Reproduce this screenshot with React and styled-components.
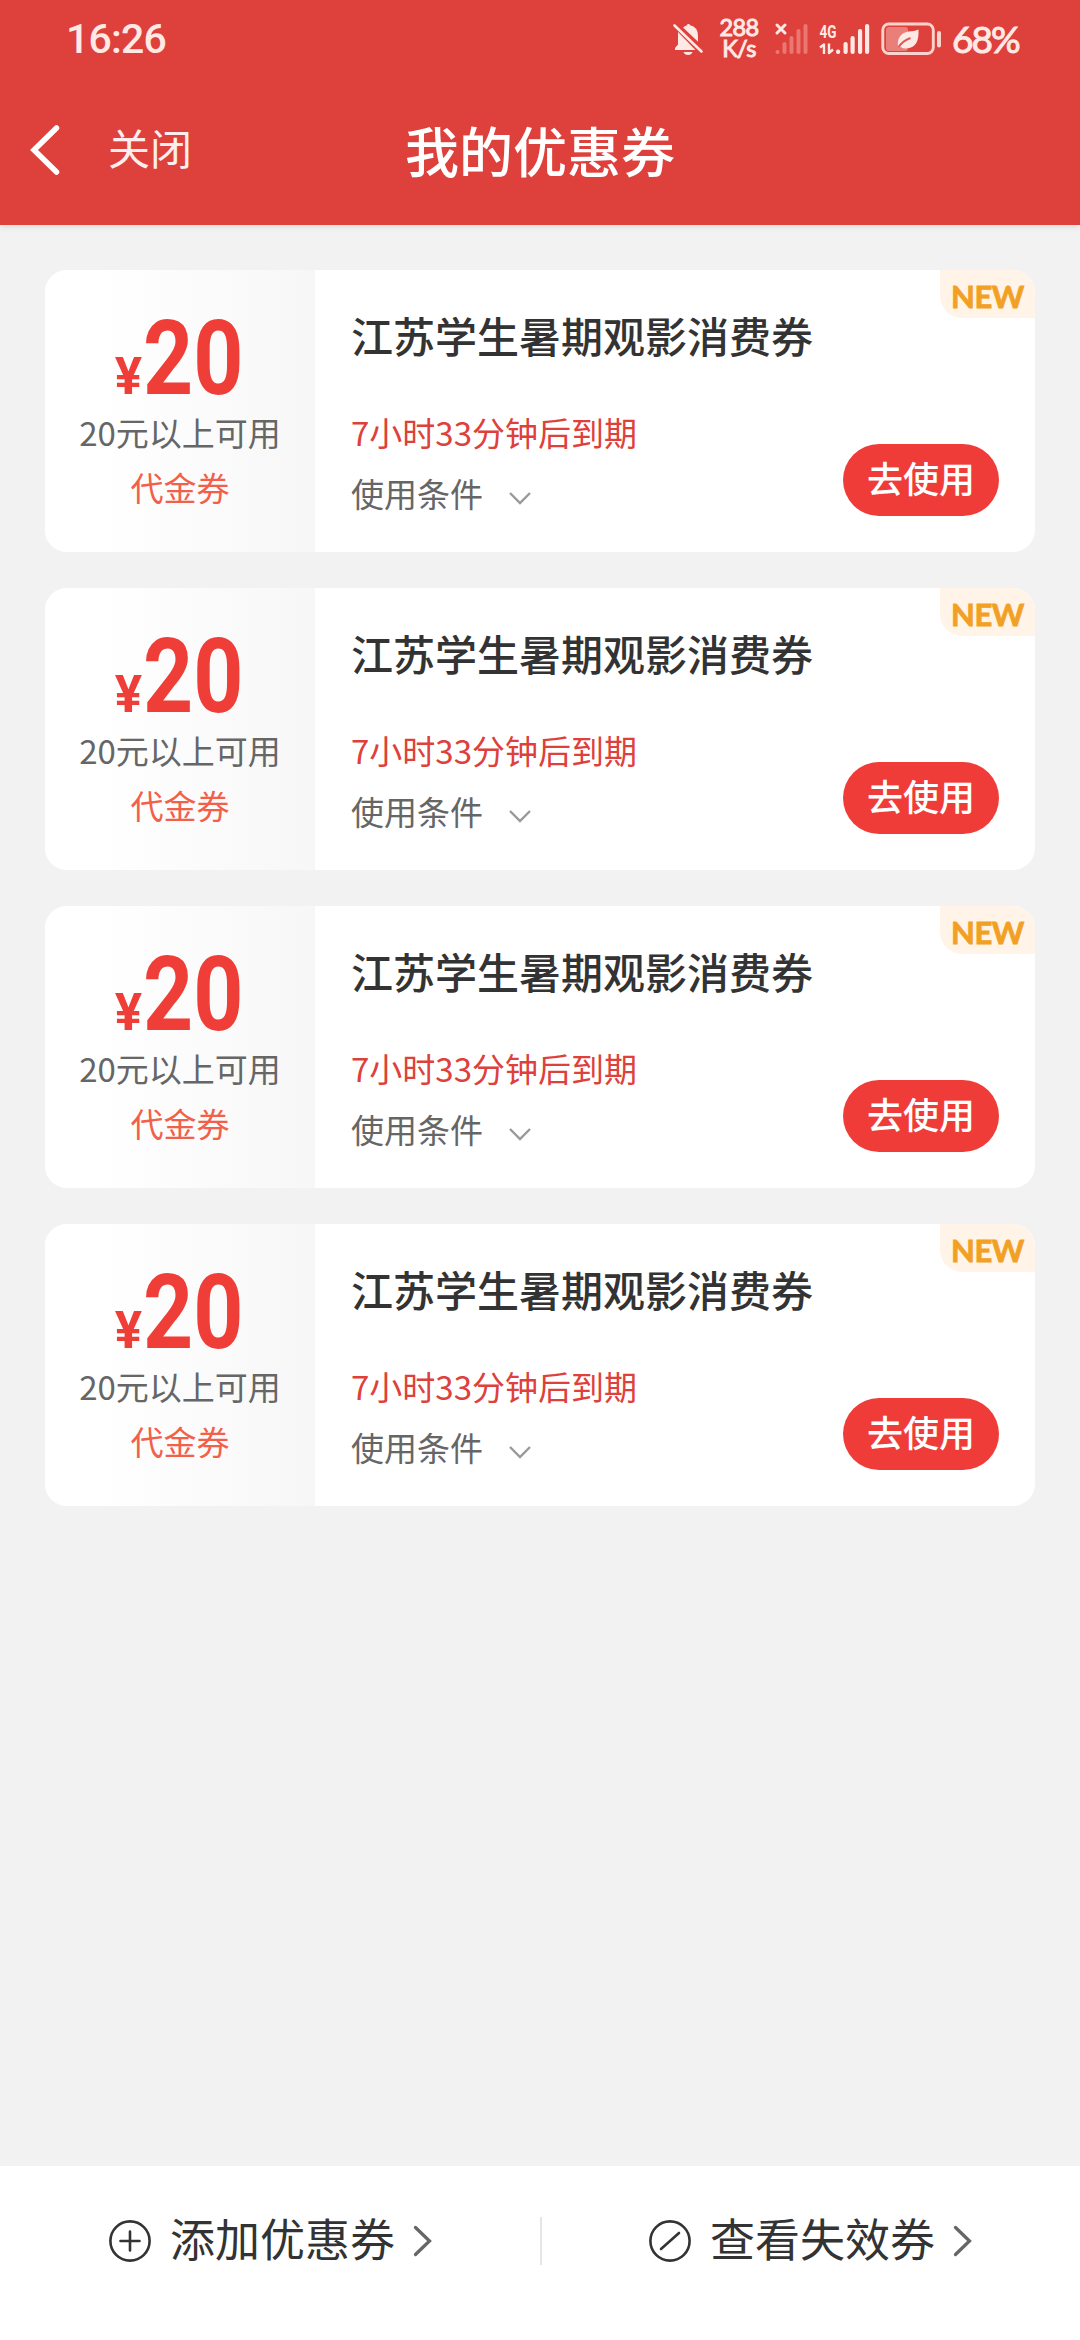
import React from "react";
import styled, { createGlobalStyle } from "styled-components";

const GlobalStyle = createGlobalStyle`
  * { box-sizing: border-box; }
  body {
    margin: 0;
    background: #f2f2f2;
    font-family: "Noto Sans CJK SC", "Noto Sans", sans-serif;
    color: #333;
  }
`;

const Screen = styled.div`
  display: flex;
  flex-direction: column;
  width: 1080px;
  height: 2340px;
  background: #f2f2f2;
  overflow: hidden;
`;

const Header = styled.header`
  height: 225px;
  background: #de403b;
  color: #fff;
  box-shadow: 0 2px 5px rgba(0, 60, 50, 0.1);
`;

const StatusBar = styled.div`
  display: flex;
  align-items: center;
  height: 78px;
  padding: 0 61px 0 66px;
  color: #ffe9e5;
  font-family: Lato, sans-serif;
`;

const Clock = styled.span`
  margin-right: auto;
  font-family: Roboto, sans-serif;
  font-size: 41px;
  font-weight: 500;
  line-height: 48px;
  letter-spacing: -0.8px;
`;

const StatusIcon = styled.svg`
  display: block;
  flex: none;
  overflow: visible;
  margin: ${(p) => p.$margin || "0"};
`;

const Speed = styled.span`
  display: flex;
  flex-direction: column;
  align-items: center;
  width: 38px;
  margin-right: 17px;
  padding-bottom: 3px;
  font-size: 23.5px;
  font-weight: 400;
  line-height: 21px;
  letter-spacing: -0.6px;
  white-space: nowrap;
  -webkit-text-stroke: 1px currentColor;
`;

const Percent = styled.span`
  width: 67px;
  font-size: 37px;
  font-weight: 400;
  line-height: 48px;
  letter-spacing: -2px;
  white-space: nowrap;
  -webkit-text-stroke: 1px currentColor;
`;

const NavBar = styled.nav`
  display: grid;
  grid-template-columns: 1fr auto 1fr;
  align-items: center;
  height: 144px;
  padding: 0 30px;
`;

const NavLeft = styled.div`
  display: flex;
  align-items: center;
  gap: 46px;
`;

const CloseText = styled.span`
  font-size: 42px;
  font-weight: 400;
  line-height: 60px;
  padding-bottom: 6px;
  color: #fdeeed;
`;

const PageTitle = styled.h1`
  margin: 0;
  font-size: 54px;
  font-weight: 500;
  line-height: 80px;
`;

const CouponList = styled.main`
  display: flex;
  flex: 1;
  flex-direction: column;
  gap: 36px;
  padding: 45px;
`;

const Card = styled.article`
  position: relative;
  display: flex;
  height: 282px;
  border-radius: 22px;
  background: #fff;
  overflow: hidden;
`;

const Stub = styled.div`
  display: flex;
  flex-direction: column;
  align-items: center;
  width: 270px;
  padding-top: 39px;
  background: linear-gradient(90deg, #fff 20%, #f7f7f7);
`;

const Amount = styled.div`
  display: flex;
  align-items: baseline;
  height: 99px;
  color: #ef3e38;
  font-family: Roboto, sans-serif;
  font-weight: 700;
  line-height: 99px;
`;

const Currency = styled.span`
  margin-right: 1px;
  font-size: 51px;
`;

const Value = styled.span`
  width: 102px;
  font-size: 103px;
  transform: scaleX(0.85);
  transform-origin: left;
`;

const StubNote = styled.span`
  font-size: 33px;
  line-height: 49px;
  color: #666;
`;

const StubKind = styled.span`
  margin-top: 6px;
  font-size: 33px;
  line-height: 49px;
  color: #f2604a;
`;

const Body = styled.div`
  flex: 1;
  padding: 35px 36px 0;
`;

const CouponTitle = styled.h2`
  margin: 0;
  font-size: 42px;
  font-weight: 500;
  line-height: 60px;
  color: #333;
`;

const BodyRow = styled.div`
  display: flex;
  align-items: flex-start;
  justify-content: space-between;
  margin-top: 43px;
`;

const Details = styled.div`
  display: flex;
  flex-direction: column;
  gap: 12px;
`;

const Expiry = styled.span`
  font-size: 33px;
  line-height: 49px;
  color: #de403b;
`;

const Terms = styled.span`
  display: flex;
  align-items: center;
  gap: 25px;
  font-size: 33px;
  line-height: 49px;
  color: #666;
`;

const UseButton = styled.button`
  width: 156px;
  height: 72px;
  margin: 36px 0 0;
  padding: 0 0 5px;
  border: 0;
  border-radius: 36px;
  background: #f03c38;
  color: #fff;
  font: 500 36px/67px "Noto Sans CJK SC", sans-serif;
`;

const Badge = styled.span`
  position: absolute;
  top: 0;
  right: 0;
  width: 95px;
  height: 48px;
  border-radius: 0 22px 0 22px;
  background: #fff4e7;
  color: #f2a024;
  font: 700 31px/53px Lato, sans-serif;
  -webkit-text-stroke: 0.8px currentColor;
  letter-spacing: -0.5px;
  text-align: center;
`;

const Footer = styled.footer`
  display: flex;
  height: 174px;
  padding: 51px 0 0 2px;
  background: #fff;
`;

const Divider = styled.i`
  width: 2px;
  height: 48px;
  background: #e6e6e6;
`;

const FooterAction = styled.div`
  display: flex;
  flex: 1;
  align-items: center;
  justify-content: center;
  height: 48px;
`;

const FooterLabel = styled.span`
  margin: 0 18px 7px 19px;
  font-size: 45px;
  line-height: 60px;
  color: #333;
`;

const MutedBell = () => (
  <StatusIcon width="32" height="34" viewBox="0 0 32 34" $margin="0 15px 0 0" fill="currentColor">
    <path d="M5 10 L22.5 28 H2 V26 L5 22.5 Z" />
    <path d="M10 5.500 Q12.500 3.600 14 3.300 Q14 2 15.500 2 Q17 2 17 3.300 Q25 5 25 14 V19.800 Z" />
    <path d="M1.500 3.500 L28.500 29.500" fill="none" stroke="currentColor" strokeWidth="2.600" strokeLinecap="round" />
    <path d="M10.500 30 H19.500 Q18.500 33 15 33 Q11.500 33 10.500 30 Z" />
  </StatusIcon>
);

const NoService = () => (
  <StatusIcon width="34" height="34" viewBox="0 0 34 34" $margin="0 10px 0 0">
    <path d="M2 3 L10 11 M10 3 L2 11" stroke="currentColor" strokeWidth="3" strokeLinecap="round" />
    <g fill="#ea7771">
      <rect x="0.500" y="28" width="4" height="4" rx="2" />
      <rect x="7.500" y="20" width="4" height="12" rx="2" />
      <rect x="14.500" y="14" width="4" height="18" rx="2" />
      <rect x="21.500" y="7" width="4" height="25" rx="2" />
      <rect x="28.500" y="2" width="4" height="30" rx="2" />
    </g>
  </StatusIcon>
);

const MobileSignal = () => (
  <StatusIcon width="52" height="34" viewBox="0 0 52 34" $margin="0 10px 0 0" fill="currentColor">
    <text x="0.500" y="15.500" fontFamily="Roboto, sans-serif" fontWeight="700" fontSize="19" textLength="17" lengthAdjust="spacingAndGlyphs">4G</text>
    <path d="M1 25.500 L5 22.500 V32 M10 21.500 V31 L14 27.500" fill="none" stroke="currentColor" strokeWidth="2.400" strokeLinejoin="round" />
    <rect x="17" y="27.500" width="4.200" height="4.500" rx="2" />
    <rect x="24.500" y="20" width="4.200" height="12" rx="2" />
    <rect x="31.500" y="14" width="4.200" height="18" rx="2" />
    <rect x="39" y="7" width="4.200" height="25" rx="2" />
    <rect x="46" y="2" width="4.200" height="30" rx="2" />
  </StatusIcon>
);

const Battery = () => (
  <StatusIcon width="62" height="34" viewBox="0 0 62 34" $margin="0 9px 0 0">
    <rect x="5" y="5" width="22" height="24" rx="3" fill="#ea7f7a" />
    <rect x="1.800" y="2" width="50.500" height="29.500" rx="6" fill="none" stroke="#fbd3ce" strokeWidth="2.900" />
    <rect x="56" y="9" width="4" height="16.500" rx="2" fill="#fbd3ce" />
    <path d="M37.500 7.500 C38 18 35.500 26.500 24.500 26.500 Q21.500 26.500 20 25 Q17.500 26.500 17 24.500 C15.500 14.500 22.500 10 27.500 9.500 Q33.500 9.500 37.500 7.500 Z" fill="#ffe9e5" />
    <path d="M17.500 25.500 Q20.500 19.500 29.500 16" stroke="#de5a55" strokeWidth="2" fill="none" />
  </StatusIcon>
);

const BackIcon = () => (
  <svg width="32" height="54" viewBox="0 0 32 54" fill="none">
    <path d="M26.500 5 L4 27 L26.500 49" stroke="#fff" strokeWidth="5.500" strokeLinecap="round" strokeLinejoin="miter" />
  </svg>
);

const ChevronDown = () => (
  <svg width="24" height="24" viewBox="0 0 24 24" fill="none">
    <path d="M2 11 L12 21 L22 11" stroke="#999" strokeWidth="2.400" />
  </svg>
);

const ChevronRight = () => (
  <svg width="20" height="34" viewBox="0 0 20 34" fill="none">
    <path d="M2.500 3.500 L16.500 17 L2.500 30.500" stroke="#666" strokeWidth="3.300" strokeLinecap="round" />
  </svg>
);

const CircleIcon = ({ mark }) => (
  <svg width="42" height="42" viewBox="0 0 42 42" fill="none" stroke="#333" strokeWidth="2.600" strokeLinecap="round">
    <circle cx="21" cy="21" r="19.600" />
    <path d={mark} />
  </svg>
);

const coupons = Array.from({ length: 4 }, (_, id) => ({
  id,
  value: "20",
  note: "20元以上可用",
  kind: "代金券",
  title: "江苏学生暑期观影消费券",
  expiry: "7小时33分钟后到期",
}));

const Coupon = ({ value, note, kind, title, expiry }) => (
  <Card>
    <Stub>
      <Amount>
        <Currency>¥</Currency>
        <Value>{value}</Value>
      </Amount>
      <StubNote>{note}</StubNote>
      <StubKind>{kind}</StubKind>
    </Stub>
    <Body>
      <CouponTitle>{title}</CouponTitle>
      <BodyRow>
        <Details>
          <Expiry>{expiry}</Expiry>
          <Terms>
            使用条件
            <ChevronDown />
          </Terms>
        </Details>
        <UseButton>去使用</UseButton>
      </BodyRow>
    </Body>
    <Badge>NEW</Badge>
  </Card>
);

export default function App() {
  return (
    <Screen>
      <GlobalStyle />
      <Header>
        <StatusBar>
          <Clock>16:26</Clock>
          <MutedBell />
          <Speed>
            <span>288</span>
            <span>K/s</span>
          </Speed>
          <NoService />
          <MobileSignal />
          <Battery />
          <Percent>68%</Percent>
        </StatusBar>
        <NavBar>
          <NavLeft>
            <BackIcon />
            <CloseText>关闭</CloseText>
          </NavLeft>
          <PageTitle>我的优惠券</PageTitle>
        </NavBar>
      </Header>
      <CouponList>
        {coupons.map((c) => (
          <Coupon key={c.id} {...c} />
        ))}
      </CouponList>
      <Footer>
        <FooterAction>
          <CircleIcon mark="M21 11.500 V30.500 M11.500 21 H30.500" />
          <FooterLabel>添加优惠券</FooterLabel>
          <ChevronRight />
        </FooterAction>
        <Divider />
        <FooterAction>
          <CircleIcon mark="M12 29 L30 13" />
          <FooterLabel>查看失效券</FooterLabel>
          <ChevronRight />
        </FooterAction>
      </Footer>
    </Screen>
  );
}
